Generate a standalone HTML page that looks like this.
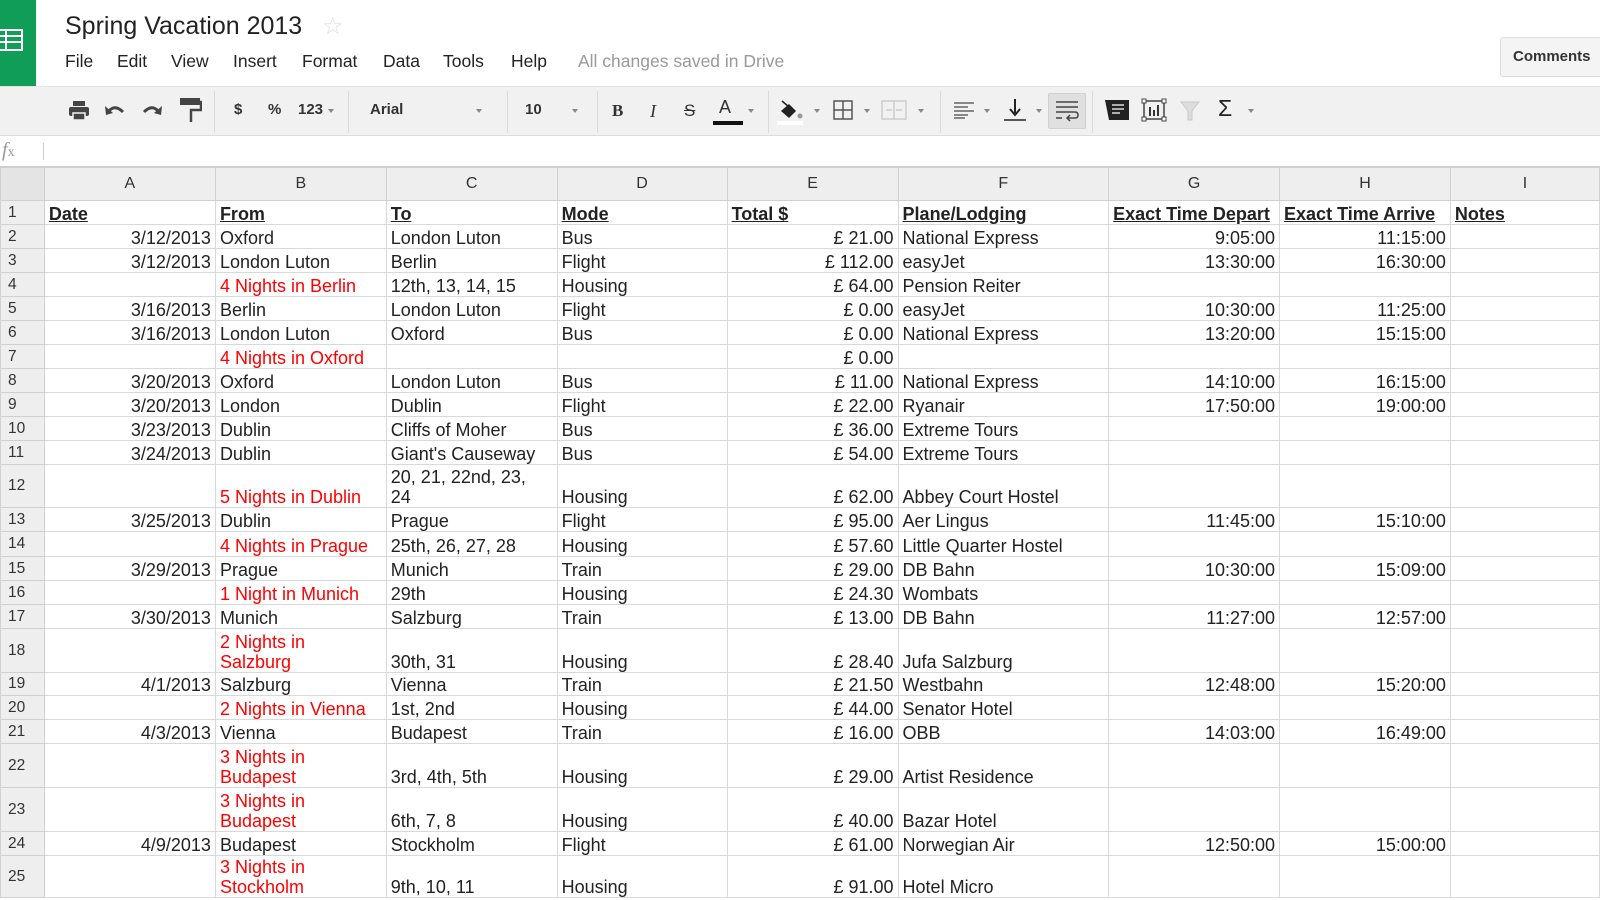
<!DOCTYPE html>
<html><head><meta charset="utf-8"><style>
*{margin:0;padding:0;box-sizing:border-box}
body{width:1600px;height:900px;overflow:hidden;background:#fff;font-family:"Liberation Sans",Arial,sans-serif;color:#222;position:relative}
.a{position:absolute}
.menu span{position:absolute;top:51px;font-size:17.5px;color:#222}
.tb{position:absolute;top:86px;left:0;width:1600px;height:50px;background:#f1f1f1;border-top:1px solid #e2e2e2;border-bottom:1px solid #dcdcdc}
.sep{position:absolute;top:4px;width:1px;height:42px;background:#dadada}
.ic{position:absolute;top:13px}
.dd{position:absolute;top:22px;width:0;height:0;border-left:3px solid transparent;border-right:3px solid transparent;border-top:4px solid #888}
.tt{position:absolute;top:14px;font-size:15px;font-weight:bold;color:#333}
table{position:absolute;left:0;top:167px;border-collapse:collapse;table-layout:fixed;font-size:18px}
td{border:1px solid #d9d9d9;vertical-align:bottom;padding:0 4px 0;white-space:nowrap;overflow:hidden;line-height:20px}
tr.h td{background:#eeeeee;text-align:center;vertical-align:middle;font-size:16px;color:#333;border-color:#d0d0d0}
td.rh{background:#eeeeee;text-align:left;padding-left:7px;vertical-align:middle;font-size:15.5px;color:#333;border-color:#d0d0d0}
td.r{text-align:right}
td.red{color:#ff0000}
tr.b td{font-weight:bold;text-decoration:underline}
</style></head><body>
<div class="a" style="left:0;top:0;width:36px;height:86px;background:#109d58"></div>
<svg class="a" style="left:0;top:28px" width="24" height="26"><rect x="-2" y="2" width="24" height="20" fill="none" stroke="#fff" stroke-width="2"/><path d="M-2 8H22M-2 14H22M6 2V22" stroke="#fff" stroke-width="2"/></svg>
<div class="a" style="left:65px;top:12px;font-size:25px;color:#222">Spring Vacation 2013</div>
<div class="a" style="left:322px;top:12px;font-size:24px;color:#ddd">☆</div>
<div class="menu">
<span style="left:65px">File</span><span style="left:117px">Edit</span><span style="left:171px">View</span><span style="left:233px">Insert</span><span style="left:302px">Format</span><span style="left:383px">Data</span><span style="left:443px">Tools</span><span style="left:511px">Help</span><span style="left:578px;color:#999">All changes saved in Drive</span>
</div>
<div class="a" style="left:1500px;top:37px;width:110px;height:40px;background:#f4f4f4;border:1px solid #ddd;border-radius:3px;font-size:15px;font-weight:bold;color:#333;padding:10px 0 0 12px">Comments</div>
<div class="tb">
<svg class="ic" style="left:68px;top:14px" width="22" height="20"><rect x="5" y="0" width="12" height="5" fill="#444"/><rect x="1" y="6" width="20" height="9" rx="2" fill="#444"/><rect x="5" y="12" width="12" height="7" fill="#444" stroke="#f1f1f1" stroke-width="1.5"/></svg>
<svg class="ic" style="left:104px;top:16px" width="22" height="16"><path d="M5 8Q11 1 19 9" fill="none" stroke="#444" stroke-width="3"/><path d="M1 3L2 12L9 10Z" fill="#444"/></svg>
<svg class="ic" style="left:141px;top:16px" width="22" height="16"><path d="M17 8Q11 1 3 9" fill="none" stroke="#444" stroke-width="3"/><path d="M21 3L20 12L13 10Z" fill="#444"/></svg>
<svg class="ic" style="left:180px;top:10px" width="22" height="28"><rect x="0" y="1" width="20" height="7" fill="#444"/><path d="M20 5H21V13H11V25" fill="none" stroke="#444" stroke-width="2.5"/></svg>
<div class="sep" style="left:214px"></div>
<span class="tt" style="left:234px">$</span><span class="tt" style="left:268px">%</span><span class="tt" style="left:298px">123</span><div class="dd" style="left:328px"></div>
<div class="sep" style="left:348px"></div>
<span class="tt" style="left:370px">Arial</span><div class="dd" style="left:476px"></div>
<div class="sep" style="left:507px"></div>
<span class="tt" style="left:525px">10</span><div class="dd" style="left:572px"></div>
<div class="sep" style="left:597px"></div>
<span class="tt" style="left:612px;font-family:'Liberation Serif',serif;font-size:17px">B</span>
<span class="tt" style="left:650px;font-family:'Liberation Serif',serif;font-style:italic;font-size:18px;font-weight:normal">I</span>
<span class="tt" style="left:684px;font-weight:normal;font-size:17px;text-decoration:line-through">S</span>
<span class="tt" style="left:719px;font-weight:normal;font-size:18px;top:10px">A</span><div class="a" style="left:713px;top:34px;width:30px;height:4px;background:#111"></div><div class="dd" style="left:748px"></div>
<div class="sep" style="left:768px"></div>
<svg class="ic" style="left:777px;top:12px" width="30" height="28"><path d="M4 12L12 5L19 12L12 19Z" fill="#222"/><path d="M5 2L12 8" stroke="#222" stroke-width="1.5"/><circle cx="23" cy="17" r="2.5" fill="#999"/><rect x="0" y="22" width="26" height="4" fill="#fff"/></svg><div class="dd" style="left:814px"></div>
<svg class="ic" style="left:833px;top:13px" width="20" height="20"><rect x="1" y="1" width="18" height="18" fill="none" stroke="#555" stroke-width="1.5"/><path d="M10 1V19M1 10H19" stroke="#555" stroke-width="1.5"/></svg><div class="dd" style="left:864px"></div>
<svg class="ic" style="left:881px;top:13px" width="26" height="20"><rect x="1" y="1" width="24" height="18" fill="none" stroke="#ccc" stroke-width="1.5"/><path d="M13 1V19M5 10H11M15 10H21" stroke="#ccc" stroke-width="1.5"/></svg><div class="dd" style="left:918px"></div>
<div class="sep" style="left:940px"></div>
<svg class="ic" style="left:953px;top:14px" width="22" height="18"><path d="M1 2H21M1 6H15M1 10H21M1 14H15M1 17H12" stroke="#666" stroke-width="1.5"/></svg><div class="dd" style="left:984px"></div>
<svg class="ic" style="left:1003px;top:11px" width="24" height="24"><path d="M12 1V15" stroke="#222" stroke-width="2"/><path d="M7 11L12 17L17 11" fill="none" stroke="#222" stroke-width="2"/><path d="M1 22H23" stroke="#222" stroke-width="1.5"/></svg><div class="dd" style="left:1036px"></div>
<div class="a" style="left:1048px;top:6px;width:38px;height:36px;background:#e0e0e0;border:1px solid #d0d0d0;border-radius:2px"></div>
<svg class="ic" style="left:1055px;top:13px" width="24" height="22"><path d="M1 2H23M1 7H23M1 12H20Q23 12 23 15Q23 18 20 18H12M1 18H7" fill="none" stroke="#444" stroke-width="1.5"/><path d="M15 15L12 18L15 21" fill="none" stroke="#444" stroke-width="1.5"/></svg>
<div class="sep" style="left:1092px"></div>
<svg class="ic" style="left:1105px;top:13px" width="24" height="20"><path d="M0 0H24V20H4Z" fill="#222"/><path d="M7 5H19M7 9H19M7 13H15" stroke="#ddd" stroke-width="1.5"/></svg>
<svg class="ic" style="left:1141px;top:11px" width="26" height="24"><rect x="3" y="3" width="20" height="18" fill="none" stroke="#444" stroke-width="1.5"/><rect x="1" y="1" width="4" height="4" fill="#fff" stroke="#444"/><rect x="21" y="1" width="4" height="4" fill="#fff" stroke="#444"/><rect x="1" y="19" width="4" height="4" fill="#fff" stroke="#444"/><rect x="21" y="19" width="4" height="4" fill="#fff" stroke="#444"/><path d="M9 18V9M13 18V12M17 18V7" stroke="#333" stroke-width="2"/></svg>
<svg class="ic" style="left:1180px;top:14px" width="20" height="20"><path d="M1 1H19L12 10V19H8V10Z" fill="#ddd" stroke="#c8c8c8"/></svg>
<div class="a" style="left:1218px;top:8px;font-size:23px;color:#222">Σ</div><div class="dd" style="left:1248px"></div>
</div>
<div class="a" style="left:2px;top:139px;font-size:20px;font-style:italic;color:#999;font-family:'Liberation Serif',serif">f<span style="font-size:14px;font-style:normal">x</span></div>
<div class="a" style="left:43px;top:143px;width:1px;height:17px;background:#ccc"></div>
<div class="a" style="left:0;top:166px;width:1600px;height:1px;background:#ccc"></div>
<table>
<colgroup><col style="width:44px"><col style="width:172px"><col style="width:171px"><col style="width:171px"><col style="width:171px"><col style="width:172px"><col style="width:211px"><col style="width:171px"><col style="width:171px"><col style="width:150px"></colgroup>
<tr class="h" style="height:33px"><td style="background:#e4e4e4"></td><td>A</td><td>B</td><td>C</td><td>D</td><td>E</td><td>F</td><td>G</td><td>H</td><td>I</td></tr>
<tr class="b" style="height:24px"><td class="rh" style="font-weight:normal;text-decoration:none">1</td><td>Date</td><td>From</td><td>To</td><td>Mode</td><td>Total $</td><td>Plane/Lodging</td><td>Exact Time Depart</td><td>Exact Time Arrive</td><td>Notes</td></tr>
<tr style="height:24px"><td class="rh">2</td><td class="r">3/12/2013</td><td>Oxford</td><td>London Luton</td><td>Bus</td><td class="r">£ 21.00</td><td>National Express</td><td class="r">9:05:00</td><td class="r">11:15:00</td><td></td></tr>
<tr style="height:24px"><td class="rh">3</td><td class="r">3/12/2013</td><td>London Luton</td><td>Berlin</td><td>Flight</td><td class="r">£ 112.00</td><td>easyJet</td><td class="r">13:30:00</td><td class="r">16:30:00</td><td></td></tr>
<tr style="height:24px"><td class="rh">4</td><td></td><td class="red">4 Nights in Berlin</td><td>12th, 13, 14, 15</td><td>Housing</td><td class="r">£ 64.00</td><td>Pension Reiter</td><td></td><td></td><td></td></tr>
<tr style="height:24px"><td class="rh">5</td><td class="r">3/16/2013</td><td>Berlin</td><td>London Luton</td><td>Flight</td><td class="r">£ 0.00</td><td>easyJet</td><td class="r">10:30:00</td><td class="r">11:25:00</td><td></td></tr>
<tr style="height:24px"><td class="rh">6</td><td class="r">3/16/2013</td><td>London Luton</td><td>Oxford</td><td>Bus</td><td class="r">£ 0.00</td><td>National Express</td><td class="r">13:20:00</td><td class="r">15:15:00</td><td></td></tr>
<tr style="height:24px"><td class="rh">7</td><td></td><td class="red">4 Nights in Oxford</td><td></td><td></td><td class="r">£ 0.00</td><td></td><td></td><td></td><td></td></tr>
<tr style="height:24px"><td class="rh">8</td><td class="r">3/20/2013</td><td>Oxford</td><td>London Luton</td><td>Bus</td><td class="r">£ 11.00</td><td>National Express</td><td class="r">14:10:00</td><td class="r">16:15:00</td><td></td></tr>
<tr style="height:24px"><td class="rh">9</td><td class="r">3/20/2013</td><td>London</td><td>Dublin</td><td>Flight</td><td class="r">£ 22.00</td><td>Ryanair</td><td class="r">17:50:00</td><td class="r">19:00:00</td><td></td></tr>
<tr style="height:24px"><td class="rh">10</td><td class="r">3/23/2013</td><td>Dublin</td><td>Cliffs of Moher</td><td>Bus</td><td class="r">£ 36.00</td><td>Extreme Tours</td><td></td><td></td><td></td></tr>
<tr style="height:24px"><td class="rh">11</td><td class="r">3/24/2013</td><td>Dublin</td><td>Giant's Causeway</td><td>Bus</td><td class="r">£ 54.00</td><td>Extreme Tours</td><td></td><td></td><td></td></tr>
<tr style="height:43px"><td class="rh">12</td><td></td><td class="red">5 Nights in Dublin</td><td>20, 21, 22nd, 23,<br>24</td><td>Housing</td><td class="r">£ 62.00</td><td>Abbey Court Hostel</td><td></td><td></td><td></td></tr>
<tr style="height:24px"><td class="rh">13</td><td class="r">3/25/2013</td><td>Dublin</td><td>Prague</td><td>Flight</td><td class="r">£ 95.00</td><td>Aer Lingus</td><td class="r">11:45:00</td><td class="r">15:10:00</td><td></td></tr>
<tr style="height:25px"><td class="rh">14</td><td></td><td class="red">4 Nights in Prague</td><td>25th, 26, 27, 28</td><td>Housing</td><td class="r">£ 57.60</td><td>Little Quarter Hostel</td><td></td><td></td><td></td></tr>
<tr style="height:24px"><td class="rh">15</td><td class="r">3/29/2013</td><td>Prague</td><td>Munich</td><td>Train</td><td class="r">£ 29.00</td><td>DB Bahn</td><td class="r">10:30:00</td><td class="r">15:09:00</td><td></td></tr>
<tr style="height:24px"><td class="rh">16</td><td></td><td class="red">1 Night in Munich</td><td>29th</td><td>Housing</td><td class="r">£ 24.30</td><td>Wombats</td><td></td><td></td><td></td></tr>
<tr style="height:24px"><td class="rh">17</td><td class="r">3/30/2013</td><td>Munich</td><td>Salzburg</td><td>Train</td><td class="r">£ 13.00</td><td>DB Bahn</td><td class="r">11:27:00</td><td class="r">12:57:00</td><td></td></tr>
<tr style="height:44px"><td class="rh">18</td><td></td><td class="red">2 Nights in<br>Salzburg</td><td>30th, 31</td><td>Housing</td><td class="r">£ 28.40</td><td>Jufa Salzburg</td><td></td><td></td><td></td></tr>
<tr style="height:23px"><td class="rh">19</td><td class="r">4/1/2013</td><td>Salzburg</td><td>Vienna</td><td>Train</td><td class="r">£ 21.50</td><td>Westbahn</td><td class="r">12:48:00</td><td class="r">15:20:00</td><td></td></tr>
<tr style="height:24px"><td class="rh">20</td><td></td><td class="red">2 Nights in Vienna</td><td>1st, 2nd</td><td>Housing</td><td class="r">£ 44.00</td><td>Senator Hotel</td><td></td><td></td><td></td></tr>
<tr style="height:24px"><td class="rh">21</td><td class="r">4/3/2013</td><td>Vienna</td><td>Budapest</td><td>Train</td><td class="r">£ 16.00</td><td>OBB</td><td class="r">14:03:00</td><td class="r">16:49:00</td><td></td></tr>
<tr style="height:44px"><td class="rh">22</td><td></td><td class="red">3 Nights in<br>Budapest</td><td>3rd, 4th, 5th</td><td>Housing</td><td class="r">£ 29.00</td><td>Artist Residence</td><td></td><td></td><td></td></tr>
<tr style="height:44px"><td class="rh">23</td><td></td><td class="red">3 Nights in<br>Budapest</td><td>6th, 7, 8</td><td>Housing</td><td class="r">£ 40.00</td><td>Bazar Hotel</td><td></td><td></td><td></td></tr>
<tr style="height:24px"><td class="rh">24</td><td class="r">4/9/2013</td><td>Budapest</td><td>Stockholm</td><td>Flight</td><td class="r">£ 61.00</td><td>Norwegian Air</td><td class="r">12:50:00</td><td class="r">15:00:00</td><td></td></tr>
<tr style="height:42px"><td class="rh">25</td><td></td><td class="red">3 Nights in<br>Stockholm</td><td>9th, 10, 11</td><td>Housing</td><td class="r">£ 91.00</td><td>Hotel Micro</td><td></td><td></td><td></td></tr>
</table>
</body></html>
